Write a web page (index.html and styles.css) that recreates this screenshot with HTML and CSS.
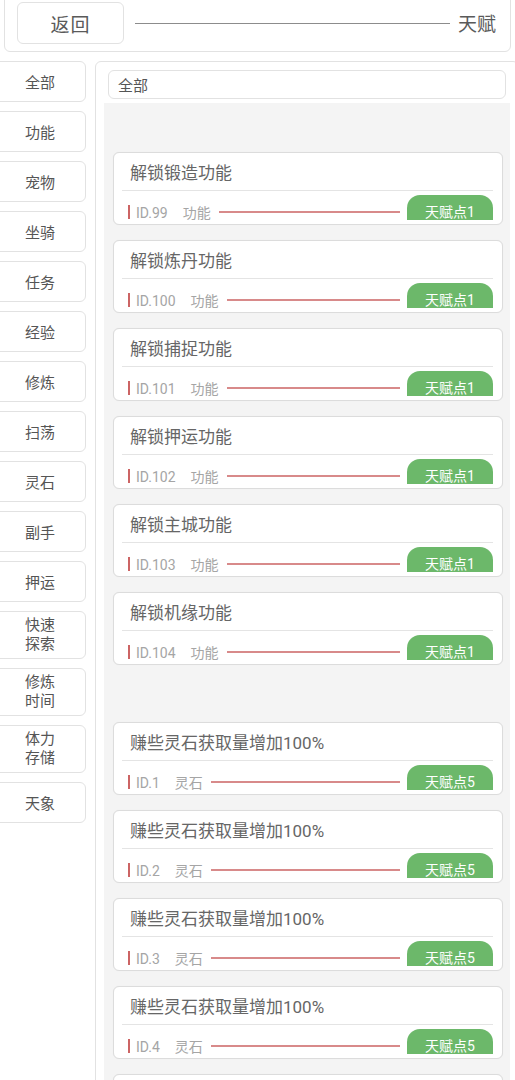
FILE: index.html
```html
<!DOCTYPE html>
<html lang="zh-CN">
<head>
<meta charset="utf-8">
<title>天赋</title>
<link rel="stylesheet" href="styles.css">
</head>
<body>
<div class="page">
  <header class="topbar">
    <div class="back-btn">返回</div>
    <div class="title-line"></div>
    <div class="title">天赋</div>
  </header>
  <div class="main">
    <nav class="sidebar">
      <div class="side-btn">全部</div>
      <div class="side-btn">功能</div>
      <div class="side-btn">宠物</div>
      <div class="side-btn">坐骑</div>
      <div class="side-btn">任务</div>
      <div class="side-btn">经验</div>
      <div class="side-btn">修炼</div>
      <div class="side-btn">扫荡</div>
      <div class="side-btn">灵石</div>
      <div class="side-btn">副手</div>
      <div class="side-btn">押运</div>
      <div class="side-btn two">快速<br>探索</div>
      <div class="side-btn two">修炼<br>时间</div>
      <div class="side-btn two">体力<br>存储</div>
      <div class="side-btn">天象</div>
    </nav>
    <section class="panel">
      <div class="search">全部</div>
      <div class="list">
        <div class="group">
          <div class="group-head"></div>
          <div class="card"><div class="card-title">解锁锻造功能</div><div class="card-foot"><span class="mark"></span><span class="id">ID.99</span><span class="cat">功能</span><span class="rule"></span><span class="badge">天赋点1</span></div></div>
          <div class="card"><div class="card-title">解锁炼丹功能</div><div class="card-foot"><span class="mark"></span><span class="id">ID.100</span><span class="cat">功能</span><span class="rule"></span><span class="badge">天赋点1</span></div></div>
          <div class="card"><div class="card-title">解锁捕捉功能</div><div class="card-foot"><span class="mark"></span><span class="id">ID.101</span><span class="cat">功能</span><span class="rule"></span><span class="badge">天赋点1</span></div></div>
          <div class="card"><div class="card-title">解锁押运功能</div><div class="card-foot"><span class="mark"></span><span class="id">ID.102</span><span class="cat">功能</span><span class="rule"></span><span class="badge">天赋点1</span></div></div>
          <div class="card"><div class="card-title">解锁主城功能</div><div class="card-foot"><span class="mark"></span><span class="id">ID.103</span><span class="cat">功能</span><span class="rule"></span><span class="badge">天赋点1</span></div></div>
          <div class="card"><div class="card-title">解锁机缘功能</div><div class="card-foot"><span class="mark"></span><span class="id">ID.104</span><span class="cat">功能</span><span class="rule"></span><span class="badge">天赋点1</span></div></div>
        </div>
        <div class="group">
          <div class="group-head"></div>
          <div class="card"><div class="card-title">赚些灵石获取量增加100%</div><div class="card-foot"><span class="mark"></span><span class="id">ID.1</span><span class="cat">灵石</span><span class="rule"></span><span class="badge">天赋点5</span></div></div>
          <div class="card"><div class="card-title">赚些灵石获取量增加100%</div><div class="card-foot"><span class="mark"></span><span class="id">ID.2</span><span class="cat">灵石</span><span class="rule"></span><span class="badge">天赋点5</span></div></div>
          <div class="card"><div class="card-title">赚些灵石获取量增加100%</div><div class="card-foot"><span class="mark"></span><span class="id">ID.3</span><span class="cat">灵石</span><span class="rule"></span><span class="badge">天赋点5</span></div></div>
          <div class="card"><div class="card-title">赚些灵石获取量增加100%</div><div class="card-foot"><span class="mark"></span><span class="id">ID.4</span><span class="cat">灵石</span><span class="rule"></span><span class="badge">天赋点5</span></div></div>
          <div class="card"><div class="card-title">赚些灵石获取量增加100%</div><div class="card-foot"><span class="mark"></span><span class="id">ID.5</span><span class="cat">灵石</span><span class="rule"></span><span class="badge">天赋点5</span></div></div>
        </div>
      </div>
    </section>
  </div>
</div>
</body>
</html>
```

FILE: styles.css
```css
html, body {
  margin: 0;
  padding: 0;
  background: #ffffff;
}

body {
  font-family: Roboto, "Noto Sans CJK SC", "Noto Sans", sans-serif;
  color: #666666;
}

.page {
  width: 515px;
  height: 1080px;
  overflow: hidden;
  display: flex;
  flex-direction: column;
}

.topbar {
  margin: -6px 4px 0 4px;
  border: 1px solid #e2e2e2;
  border-radius: 6px;
  padding: 7px 14px 7px 12px;
  display: flex;
  align-items: center;
  flex-shrink: 0;
}

.back-btn {
  width: 105px;
  height: 40px;
  border: 1px solid #e2e2e2;
  border-radius: 6px;
  display: flex;
  align-items: center;
  justify-content: center;
  font-size: 19px;
  color: #5a5a5a;
  letter-spacing: 1px;
}

.title-line {
  flex: 1;
  height: 1px;
  background: #8c8c8c;
  margin: 0 8px 0 11px;
}

.title {
  font-size: 19px;
  color: #5a5a5a;
  line-height: 1;
  padding-top: 2px;
}

.main {
  display: flex;
  margin-top: 9px;
  align-items: flex-start;
  flex: 1;
  min-height: 0;
}

.sidebar {
  width: 92px;
  margin-left: -6px;
  display: flex;
  flex-direction: column;
  gap: 9px;
  flex-shrink: 0;
}

.side-btn {
  height: 39px;
  border: 1px solid #e2e2e2;
  border-radius: 6px;
  display: flex;
  align-items: center;
  justify-content: center;
  font-size: 15px;
  color: #555555;
  text-align: center;
}

.side-btn.two {
  height: 46px;
  line-height: 19px;
}

.panel {
  width: 424px;
  margin-left: 9px;
  border: 1px solid #e2e2e2;
  border-radius: 6px;
  padding: 8px 8px 0 8px;
  height: 1100px;
  flex-shrink: 0;
  box-sizing: border-box;
}

.search {
  margin: 0 4px;
  height: 27px;
  border: 1px solid #e2e2e2;
  border-radius: 6px;
  font-size: 15px;
  color: #555555;
  display: flex;
  align-items: center;
  padding-left: 9px;
}

.list {
  margin-top: 4px;
  background: #f4f4f4;
  padding: 0 7px 0 9px;
  height: 1200px;
}

.group {
  padding-bottom: 8px;
}

.group-head {
  height: 34px;
}

.card {
  margin-top: 15px;
  background: #ffffff;
  border: 1px solid #dcdcdc;
  border-radius: 6px;
  padding: 0 9px 4px 8px;
  box-shadow: 0 0 1px rgba(0, 0, 0, 0.06);
}

.card-title {
  height: 37px;
  display: flex;
  align-items: center;
  padding-left: 8px;
  font-size: 17px;
  color: #666666;
  border-bottom: 1px solid #e4e4e4;
}

.card-foot {
  height: 29px;
  display: flex;
  align-items: flex-start;
  font-size: 14px;
  line-height: 14px;
  color: #a5a5a5;
}

.mark {
  width: 2px;
  height: 14px;
  background: #cc6464;
  margin-left: 6px;
  margin-top: 14px;
}

.id {
  margin-left: 6px;
  margin-top: 15px;
}

.cat {
  margin-left: 15px;
  margin-top: 15px;
}

.rule {
  flex: 1;
  height: 2px;
  background: #d88a8a;
  margin: 20px 7px 0 8px;
}

.badge {
  width: 86px;
  height: 25px;
  margin-top: 4px;
  box-sizing: border-box;
  padding-top: 10px;
  overflow: hidden;
  border-radius: 13px 13px 0 0;
  background: #6cb86a;
  color: #ffffff;
  font-size: 14px;
  line-height: 14px;
  text-align: center;
}
```
